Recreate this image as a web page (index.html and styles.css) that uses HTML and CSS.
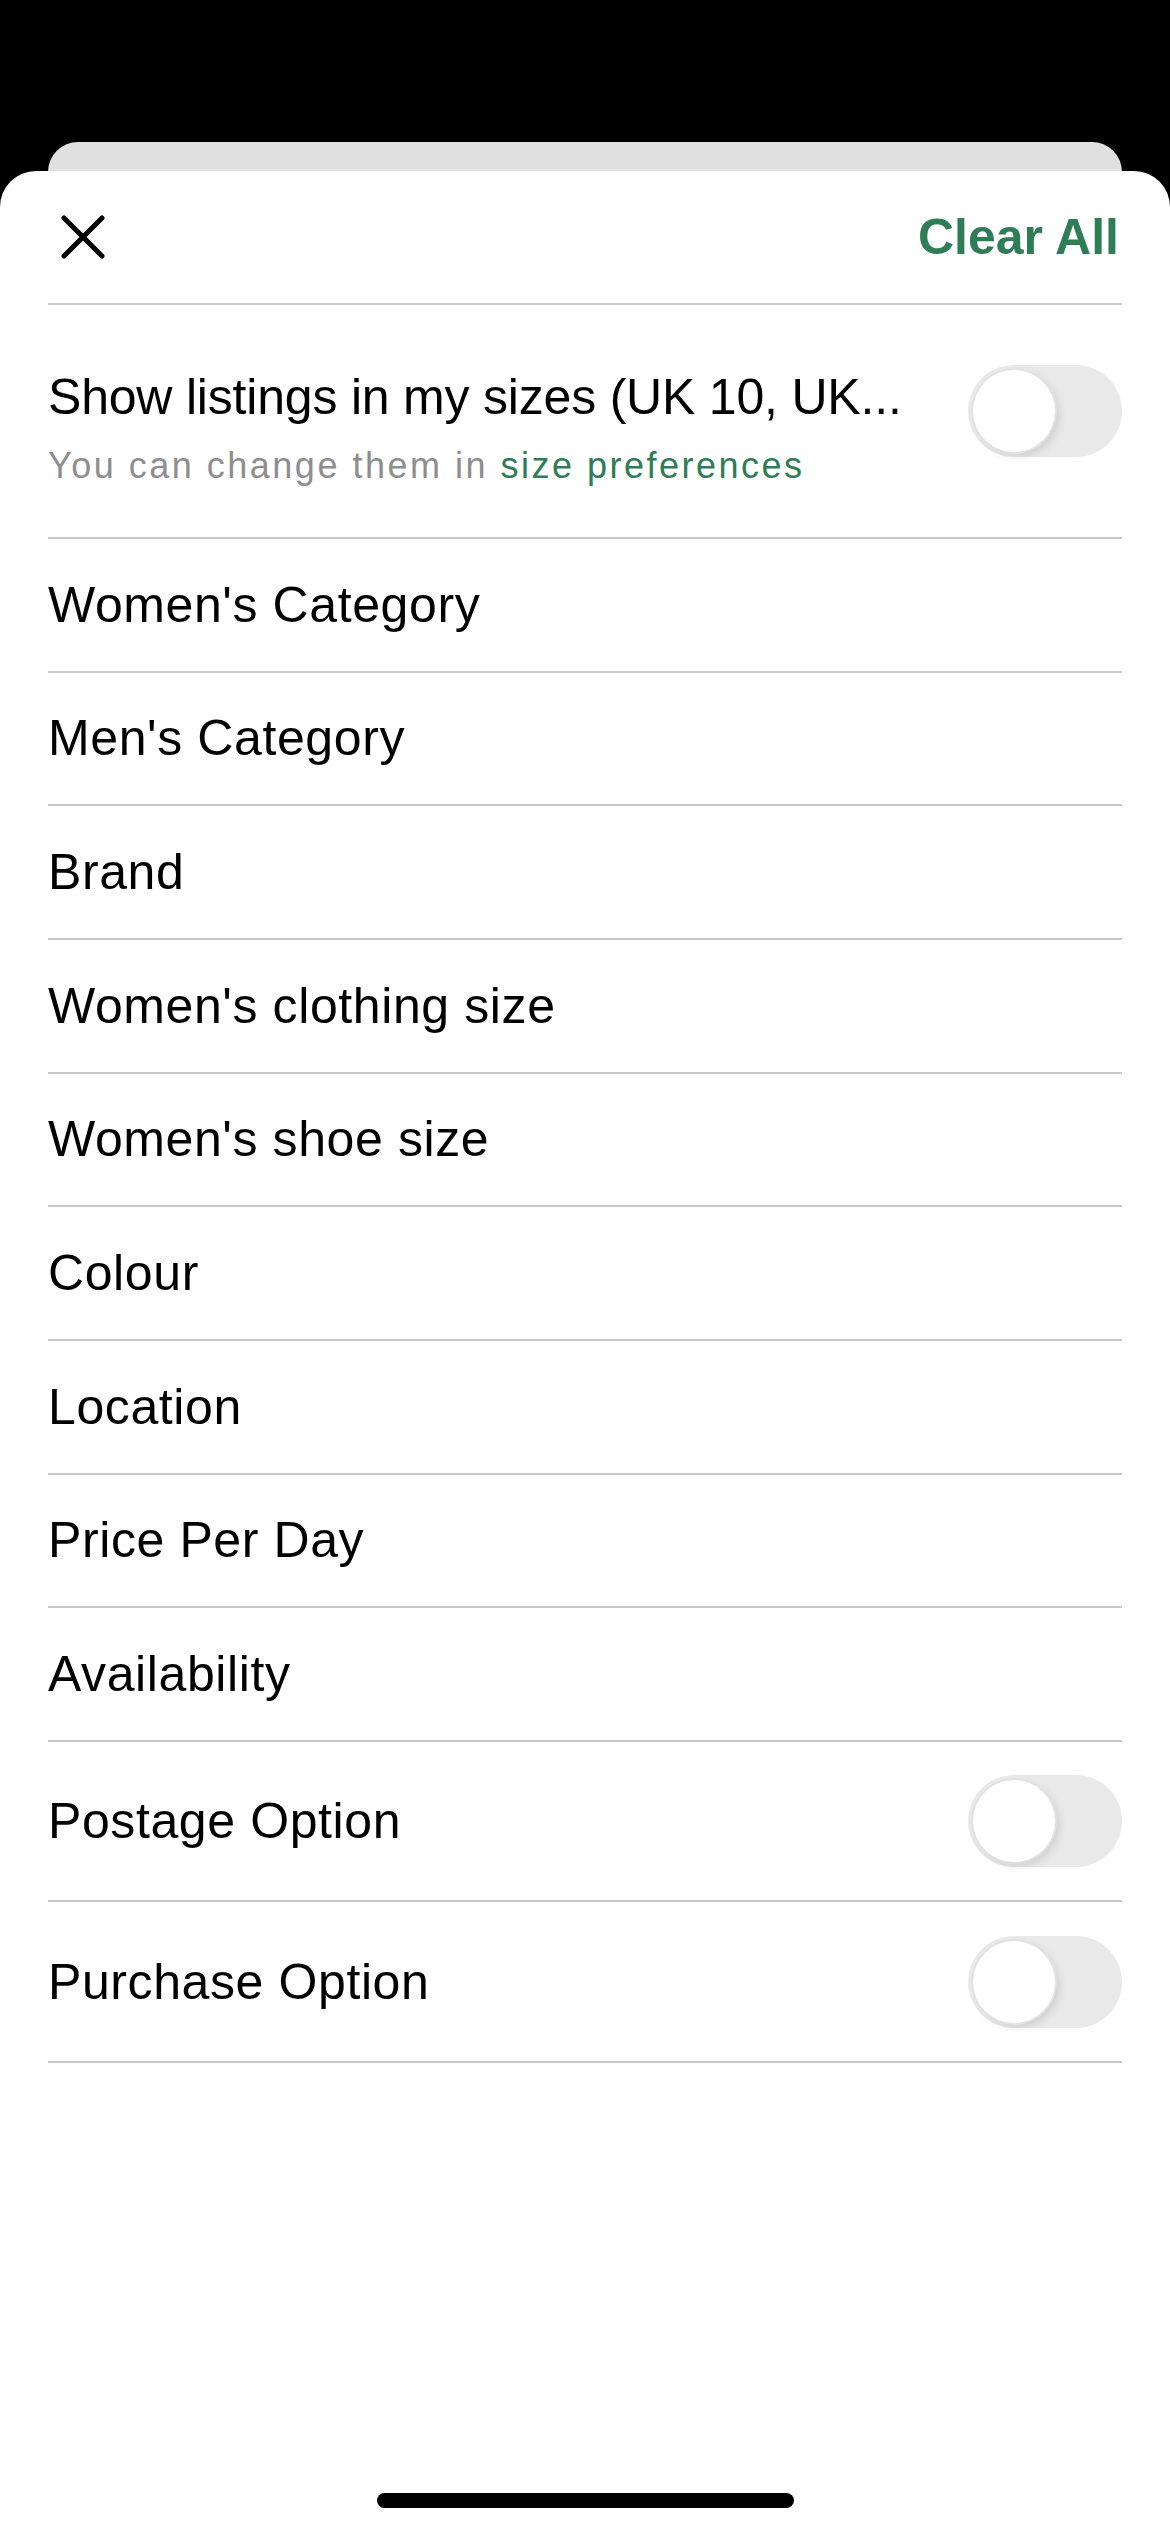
FILE: index.html
```html
<!DOCTYPE html>
<html lang="en">
<head>
<meta charset="utf-8">
<title>Filters</title>
<link rel="stylesheet" href="styles.css">
</head>
<body>
<div class="screen">
  <div class="back-card"></div>
  <div class="sheet">
    <div class="content">
      <header class="header">
        <button class="close" aria-label="Close">
          <svg width="44" height="44" viewBox="0 0 44 44"><path d="M3 3 L41 41 M41 3 L3 41" stroke="#000" stroke-width="5" stroke-linecap="round" fill="none"/></svg>
        </button>
        <span class="clear">Clear All</span>
      </header>

      <div class="row row-size">
        <div class="size-text">
          <div class="title">Show listings in my sizes (UK 10, UK...</div>
          <div class="sub">You can change them in <span class="link">size preferences</span></div>
        </div>
        <div class="toggle toggle-size"><div class="knob"></div></div>
      </div>

      <div class="row plain"><span class="label">Women's Category</span></div>
      <div class="row plain"><span class="label">Men's Category</span></div>
      <div class="row plain"><span class="label">Brand</span></div>
      <div class="row plain"><span class="label">Women's clothing size</span></div>
      <div class="row plain"><span class="label">Women's shoe size</span></div>
      <div class="row plain"><span class="label">Colour</span></div>
      <div class="row plain"><span class="label">Location</span></div>
      <div class="row plain"><span class="label">Price Per Day</span></div>
      <div class="row plain"><span class="label">Availability</span></div>
      <div class="row switch"><span class="label">Postage Option</span><div class="toggle"><div class="knob"></div></div></div>
      <div class="row switch"><span class="label">Purchase Option</span><div class="toggle"><div class="knob"></div></div></div>
    </div>
    <div class="home-indicator"></div>
  </div>
</div>
</body>
</html>
```

FILE: styles.css
```css
html, body {
  margin: 0;
  padding: 0;
  background: #000;
}

.screen {
  width: 1170px;
  min-height: 2532px;
  display: flex;
  flex-direction: column;
  background: #000;
  font-family: "Liberation Sans", Arial, sans-serif;
  color: #000;
}

.back-card {
  height: 60px;
  margin: 142px 48px 0;
  background: #e0e0e0;
  border-radius: 30px 30px 0 0;
}

.sheet {
  flex: 1;
  margin-top: -31px;
  background: #fff;
  border-radius: 36px 36px 0 0;
  display: flex;
  flex-direction: column;
}

.content {
  padding: 0 48px;
}

.header {
  height: 132px;
  display: flex;
  align-items: center;
  justify-content: space-between;
  border-bottom: 2px solid #c8c8c8;
}

.close {
  border: 0;
  background: none;
  padding: 0;
  margin-left: 13px;
  width: 44px;
  height: 44px;
  display: block;
}

.close svg {
  display: block;
}

.clear {
  font-size: 50px;
  font-weight: bold;
  color: #2e7d56;
  margin-right: 3px;
}

.row {
  display: flex;
  align-items: center;
  justify-content: space-between;
  border-bottom: 2px solid #c8c8c8;
}

.row-size {
  height: 232px;
}

.size-text {
  margin-top: 12px;
}

.plain {
  height: 131.67px;
}

.switch {
  height: 158.5px;
}

.label, .title {
  font-size: 50px;
  letter-spacing: 0.6px;
  white-space: nowrap;
}

.title {
  letter-spacing: -0.2px;
}

.sub {
  margin-top: 19px;
  font-size: 36px;
  letter-spacing: 2.5px;
  color: #8e8e8e;
  white-space: nowrap;
}

.link {
  color: #2e7d56;
}

.toggle {
  width: 154px;
  height: 92px;
  border-radius: 46px;
  background: #e9e9e9;
  padding: 5px;
  box-sizing: border-box;
  flex-shrink: 0;
}

.toggle-size {
  margin-bottom: 20px;
}

.knob {
  width: 82px;
  height: 82px;
  border-radius: 50%;
  background: #fff;
  box-shadow: 0 0 0 2px #e2e2e2, 4px 4px 8px rgba(0, 0, 0, 0.12);
}

.home-indicator {
  margin: auto auto 24px;
  width: 417px;
  height: 15px;
  border-radius: 8px;
  background: #000;
}
```
